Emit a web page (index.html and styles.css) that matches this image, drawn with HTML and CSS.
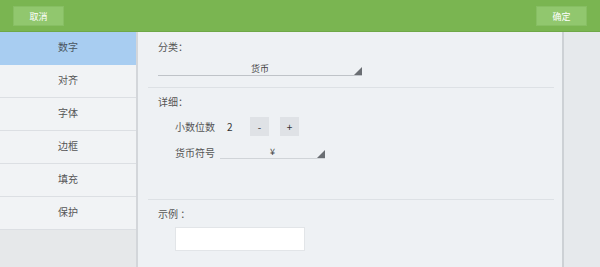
FILE: index.html
```html
<!DOCTYPE html>
<html>
<head>
<meta charset="utf-8">
<link rel="stylesheet" href="styles.css">
</head>
<body>
<div class="app">
  <header class="topbar">
    <button class="tbtn">取消</button>
    <button class="tbtn">确定</button>
  </header>
  <div class="body">
    <nav class="side">
      <div class="item active">数字</div>
      <div class="item">对齐</div>
      <div class="item">字体</div>
      <div class="item">边框</div>
      <div class="item">填充</div>
      <div class="item">保护</div>
      <div class="side-rest"></div>
    </nav>
    <main class="panel">
      <section class="sec sec-cat">
        <div class="label">分类：</div>
        <div class="select wide"><span>货币</span><i class="tri"></i></div>
      </section>
      <section class="sec sec-detail">
        <div class="label">详细：</div>
        <div class="row">
          <span class="rlabel">小数位数</span>
          <span class="num">2</span>
          <span class="sbtn">-</span>
          <span class="sbtn">+</span>
        </div>
        <div class="row row2">
          <span class="rlabel">货币符号</span>
          <div class="select narrow"><span>¥</span><i class="tri"></i></div>
        </div>
      </section>
      <section class="sec sec-ex">
        <div class="label">示例 ：</div>
        <div class="sample"></div>
      </section>
    </main>
    <aside class="rside"></aside>
  </div>
</div>
</body>
</html>
```
FILE: styles.css
```css
* { box-sizing: border-box; }
html, body { margin: 0; padding: 0; }
body {
  width: 600px; height: 267px; overflow: hidden;
  font-family: "Noto Sans CJK SC", "Noto Sans", sans-serif;
  font-size: 10px; color: #555;
  background: #eef1f4;
}
.app { display: flex; flex-direction: column; height: 267px; }
.topbar {
  height: 32px; flex: none;
  background: #7ab551;
  border-bottom: 1px solid #6fa847;
  display: flex; justify-content: space-between; align-items: flex-start;
  padding: 6px 13px 0 13px;
}
.tbtn {
  width: 51px; height: 20px;
  background: #91c76e;
  border: 1px solid #87be63;
  color: #fff; font-family: inherit; font-size: 9px;
  padding: 0; margin: 0;
}
.body { flex: 1; display: flex; min-height: 0; }
.side {
  width: 138px; flex: none; display: flex; flex-direction: column;
  background: #e6e8eb;
  border-right: 2px solid #d3d6da;
}
.item {
  height: 33px; flex: none;
  display: flex; align-items: center; justify-content: center;
  padding-bottom: 3px;
  background: #f1f3f5; border-bottom: 1px solid #dcdfe3;
  color: #555;
}
.item.active { background: #a8cdf1; border-bottom-color: #a8cdf1; color: #4a5560; }
.side-rest { flex: 1; background: #e6e8ea; }
.panel {
  width: 426px; flex: none;
  background: #eef1f4;
  border-right: 2px solid #cdd1d5;
  padding: 0 8px 0 10px;
  display: flex; flex-direction: column;
}
.rside { flex: 1; background: #e6e9ec; }
.sec { border-bottom: 1px solid #dde1e5; padding-left: 10px; }
.sec-ex { border-bottom: none; }
.label { color: #555; height: 14px; line-height: 14px; }
.sec-cat { height: 56px; padding-top: 8px; }
.select {
  position: relative;
  border-bottom: 1px solid #bfc3c8;
  display: flex; justify-content: center; align-items: flex-end;
  height: 13px;
}
.select span { font-size: 9px; line-height: 12px; color: #444; }
.select.wide { width: 204px; margin-top: 9px; }
.select.narrow { width: 105px; margin-left: 0; border-bottom-color: #d0d4d8; }
.tri {
  position: absolute; right: 0; bottom: 0;
  width: 0; height: 0;
  border-left: 8px solid transparent;
  border-bottom: 8px solid #6a6e73;
}
.sec-detail { height: 112px; padding-top: 7px; }
.row { display: flex; align-items: center; margin-left: 17px; margin-top: 8px; height: 19px; }
.rlabel { width: 52px; color: #555; }
.num { width: 23px; color: #333; }
.sbtn {
  width: 19px; height: 19px; margin-right: 11px;
  background: #dfe2e6; color: #333;
  display: flex; align-items: center; justify-content: center;
  font-size: 10px;
}
.row2 { margin-top: 7px; }
.row2 .rlabel { width: 45px; }
.sec-ex { padding-top: 7px; }
.sample { width: 130px; height: 24px; background: #fff; border: 1px solid #e2e5e8; margin: 6px 0 0 17px; }
```
